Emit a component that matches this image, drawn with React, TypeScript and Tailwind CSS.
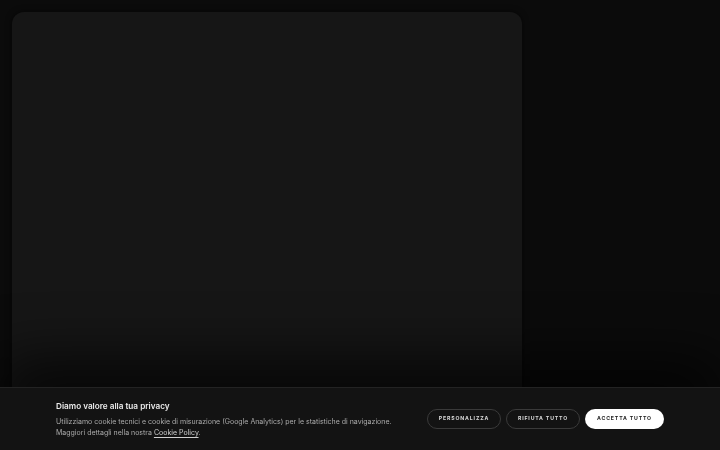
import React from "react"

function CookieBanner() {
  return (
    <div className="fixed inset-x-0 bottom-0 z-20 border-t border-[#232323] bg-[#131313] shadow-[0_-24px_60px_rgba(0,0,0,0.8)]">
      <div className="flex h-[62px] items-center justify-between px-14">
        <div className="flex flex-col">
          <h2 className="text-[8.2px] font-semibold leading-[12px] text-[#ececec]">Diamo valore alla tua privacy</h2>
          <p className="mt-[4px] text-[7px] leading-[11.5px] text-[#ababab]">
            Utilizziamo cookie tecnici e cookie di misurazione (Google Analytics) per le statistiche di navigazione.
            <br />
            Maggiori dettagli nella nostra{" "}
            <a href="#" className="text-[#d0d0d0] underline underline-offset-[1.5px]">
              Cookie Policy
            </a>
            .
          </p>
        </div>
        <div className="flex items-center gap-[5px]">
          <button className="h-[20px] w-[74px] rounded-full border border-[#3a3a3a] text-[5.2px] font-bold tracking-[0.16em] text-[#d8d8d8]">
            PERSONALIZZA
          </button>
          <button className="h-[20px] w-[74px] rounded-full border border-[#3a3a3a] text-[5.2px] font-bold tracking-[0.16em] text-[#d8d8d8]">
            RIFIUTA TUTTO
          </button>
          <button className="h-[20px] w-[79px] rounded-full bg-white text-[5.2px] font-bold tracking-[0.16em] text-[#1a1a1a]">
            ACCETTA TUTTO
          </button>
        </div>
      </div>
    </div>
  )
}

export default function App() {
  return (
    <div className="h-[450px] w-full overflow-hidden bg-[#0b0b0b] font-['Inter',sans-serif]">
      <div className="flex h-full p-3">
        <div className="h-full w-[510px] rounded-[12px] bg-[#161616] shadow-[0_0_6px_rgba(0,0,0,0.6)]" />
      </div>
      <CookieBanner />
    </div>
  )
}
